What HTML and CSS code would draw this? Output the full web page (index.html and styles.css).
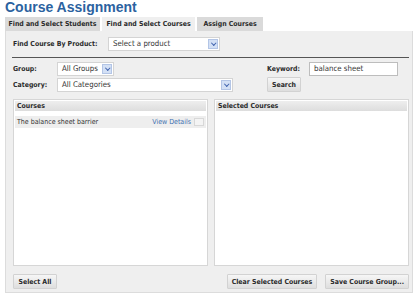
FILE: index.html
```html
<!DOCTYPE html>
<html lang="en">
<head>
  <meta charset="UTF-8">
  <title>Course Assignment</title>
  <link rel="stylesheet" href="styles.css">
</head>
<body>
  <h1 class="title">Course Assignment</h1>

  <div class="tabs">
    <div class="tab students">Find and Select Students</div>
    <div class="tab courses active">Find and Select Courses</div>
    <div class="tab assign">Assign Courses</div>
  </div>

  <div class="panel">
    <div class="product-row">
      <span class="label product-label">Find Course By Product:</span>
      <div class="select product">Select a product<span class="arrow"></span></div>
    </div>

    <div class="filters">
      <div class="filter-left">
        <div class="frow">
          <span class="label short">Group:</span>
          <div class="select group">All Groups<span class="arrow"></span></div>
        </div>
        <div class="frow">
          <span class="label short">Category:</span>
          <div class="select category">All Categories<span class="arrow"></span></div>
        </div>
      </div>
      <div class="filter-right">
        <div class="frow">
          <span class="label kw">Keyword:</span>
          <div class="input">balance sheet</div>
        </div>
        <div class="frow">
          <button class="btn">Search</button>
        </div>
      </div>
    </div>

    <div class="lists">
      <div class="list">
        <div class="list-head">Courses</div>
        <div class="list-row">
          <span class="course">The balance sheet barrier</span>
          <span class="details">View Details</span>
          <span class="mini"></span>
        </div>
      </div>
      <div class="list">
        <div class="list-head">Selected Courses</div>
      </div>
    </div>

    <div class="footer">
      <button class="btn select-all">Select All</button>
      <div class="footer-right">
        <button class="btn">Clear Selected Courses</button>
        <button class="btn">Save Course Group...</button>
      </div>
    </div>
  </div>
</body>
</html>
```

FILE: styles.css
```css
* {
  box-sizing: border-box;
}

body {
  margin: 0;
  padding: 0 5px;
  width: 420px;
  height: 300px;
  background: #fff;
  font-family: "DejaVu Sans Condensed", "Liberation Sans", Arial, sans-serif;
  font-size: 6.9px;
  color: #222;
  overflow: hidden;
  white-space: nowrap;
}

.title {
  margin: 0;
  height: 17px;
  font-family: "Liberation Sans", Arial, sans-serif;
  font-size: 14px;
  font-weight: bold;
  color: #2b62a0;
  line-height: 15px;
}

.tabs {
  display: flex;
  gap: 2px;
  height: 14px;
}

.tab {
  background: #dadada;
  font-weight: bold;
  line-height: 14px;
  text-align: center;
  color: #2a2a2a;
}

.tab.active {
  background: #efefef;
}

.students {
  width: 95px;
}

.courses {
  width: 93px;
}

.assign {
  width: 66px;
}

.panel {
  width: 408px;
  height: 262px;
  background: #efefef;
  border: 1px solid #dcdcdc;
  border-top: none;
  padding: 6px 3px 0 7px;
  display: flex;
  flex-direction: column;
}

.label {
  font-weight: bold;
  color: #2a2a2a;
}

.product-row {
  display: flex;
  align-items: center;
  height: 21px;
  padding-bottom: 6px;
  border-bottom: 1px solid #555;
  margin-left: -1px;
  padding-left: 1px;
}

.product-label {
  width: 95px;
}

.select {
  position: relative;
  height: 14px;
  background: #fff;
  border: 1px solid #d4d4d4;
  padding-left: 4px;
  line-height: 12px;
  font-size: 7.8px;
  color: #333;
}

.arrow {
  position: absolute;
  right: 1px;
  top: 1px;
  width: 10px;
  height: 10px;
  background: #d3e0f5;
  border: 1px solid #b3c5e6;
}

.arrow::after {
  content: "";
  position: absolute;
  left: 2.5px;
  top: 1px;
  width: 2.5px;
  height: 2.5px;
  border-right: 1.3px solid #3f62ad;
  border-bottom: 1.3px solid #3f62ad;
  transform: rotate(45deg);
}

.product {
  width: 112px;
}

.filters {
  display: flex;
  justify-content: space-between;
  margin-top: 3px;
}

.frow {
  display: flex;
  align-items: center;
  height: 15px;
  margin-bottom: 1px;
}

.short {
  width: 44px;
}

.group {
  width: 57px;
}

.category {
  width: 176px;
}

.filter-right {
  width: 131px;
  margin-right: 11px;
}

.kw {
  width: 42px;
}

.input {
  width: 89px;
  height: 14px;
  background: #fff;
  border: 1px solid #bdbdbd;
  padding-left: 4px;
  line-height: 12px;
  font-size: 7.8px;
  color: #333;
}

.btn {
  height: 15px;
  padding: 0 4px;
  font-family: "DejaVu Sans Condensed", "Liberation Sans", Arial, sans-serif;
  font-size: 6.9px;
  font-weight: bold;
  color: #2a2a2a;
  background: linear-gradient(#f6f6f6, #dedede);
  border: 1px solid #d2d2d2;
  border-radius: 1px;
  white-space: nowrap;
  flex-shrink: 0;
}

.lists {
  display: flex;
  gap: 6px;
  margin-top: 6px;
  height: 167px;
}

.list {
  background: #fff;
  border: 1px solid #d6d6d6;
}

.list:first-child {
  width: 195px;
}

.list:last-child {
  width: 195px;
}

.list-head {
  height: 10px;
  margin: 1px;
  padding-left: 2px;
  background: linear-gradient(#eeeeee, #dddddd);
  font-weight: bold;
  line-height: 10px;
  color: #2a2a2a;
}

.list-row {
  display: flex;
  align-items: center;
  height: 12px;
  margin: 5px 1px 0 1px;
  padding-left: 2px;
  background: #eeeeee;
  font-size: 7px;
}

.course {
  flex: 1;
  color: #333;
}

.details {
  color: #4170b0;
}

.mini {
  width: 10px;
  height: 8px;
  margin: 0 2px 0 3px;
  border: 1px solid #d8d8d8;
  background: #f4f4f4;
}

.footer {
  display: flex;
  justify-content: space-between;
  margin-top: 8px;
}

.footer-right {
  display: flex;
  gap: 8px;
}

.select-all {
  width: 44px;
}
```
